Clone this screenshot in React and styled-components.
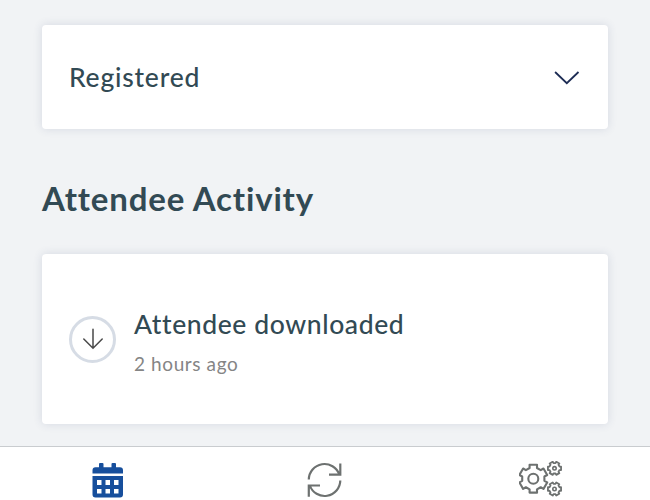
import React from 'react';
import styled, { createGlobalStyle } from "styled-components"

const GlobalStyle = createGlobalStyle`
  body {
    margin: 0;
    background: #f1f3f5;
    font-family: Lato, "Open Sans", sans-serif;
    color: #324a54;
  }
`

const Screen = styled.div`
  display: flex;
  flex-direction: column;
  height: 500px;
  overflow: hidden;
`

const Content = styled.main`
  flex: 1;
  padding: 25px 42px 0;
`

const Card = styled.section`
  display: flex;
  align-items: center;
  justify-content: ${props => props.$spread ? 'space-between' : 'flex-start'};
  box-sizing: border-box;
  height: ${props => props.$height}px;
  padding: 0 28px 0 27px;
  border-radius: 4px;
  background: #fff;
  box-shadow: 0 0 10px rgba(50, 65, 115, 0.14);
`

const Label = styled.div`
  font-size: 26.5px;
  font-weight: 500;
  line-height: 32px;
  letter-spacing: ${props => props.$spacing || 0}px;
`

const Heading = styled.h2`
  margin: 51px 0 37px;
  font-size: 33px;
  font-weight: 700;
  line-height: 37px;
  letter-spacing: 0.82px;
`

const Badge = styled.div`
  display: flex;
  align-items: center;
  justify-content: center;
  box-sizing: border-box;
  width: 47px;
  height: 47px;
  margin-right: 18px;
  border: 3px solid #d6dce5;
  border-radius: 50%;
`

const Activity = styled.div`
  padding-top: 6px;
`

const Time = styled.div`
  margin-top: 12px;
  font-size: 19px;
  line-height: 24px;
  letter-spacing: 0.6px;
  color: #858585;
`

const TabBar = styled.nav`
  display: grid;
  grid-template-columns: repeat(3, 1fr);
  box-sizing: border-box;
  height: 54px;
  border-top: 1px solid #c9cccf;
  background: #fff;
`

const Tab = styled.a`
  display: flex;
  justify-content: center;
  padding-top: 14px;
  color: ${props => props.$active ? '#174f9c' : '#6d7170'};
`

// outline of a six toothed wheel, angle turns the first tooth
function gearPath(cx, cy, outer, inner, angle) {
    const points = []
    for (let i = 0; i < 6; i++) {
        const a = angle + i * 60
        points.push([inner, a - 19], [outer, a - 15], [outer, a + 15], [inner, a + 19])
    }
    return points.map(([r, a], i) => {
        const t = a * Math.PI / 180
        return `${i ? 'L' : 'M'}${(cx + r * Math.cos(t)).toFixed(2)} ${(cy + r * Math.sin(t)).toFixed(2)}`
    }).join('') + 'Z'
}

function ChevronIcon() {
    return (
        <svg width="26" height="16" viewBox="0 0 26 16" fill="none" stroke="#1d2c54" strokeWidth="1.8">
            <path d="M1.1 3L12.8 14.2L24.5 3" />
        </svg>
    )
}

function ArrowDownIcon() {
    return (
        <svg width="22" height="22" viewBox="0 0 22 22" fill="none" stroke="#484848" strokeWidth="1.5" strokeLinecap="round">
            <path d="M11 1.3V20.3M1.8 11L11 20.3L20.2 11" />
        </svg>
    )
}

function CalendarIcon() {
    return (
        <svg width="32" height="37" viewBox="0 0 32 37" fill="currentColor">
            <path d="M3.5 6.300H7V3q0-1 1-1h2.5q1 0 1 1v3.300h8V3q0-1 1-1H23q1 0 1 1v3.300h4q3 0 3 3v3.200H.5V9.300q0-3 3-3Z" />
            <path fillRule="evenodd" d="M.5 15H31v18.500q0 3-3 3H3.500q-3 0-3-3ZM5 19v5h4.500v-5ZM13.500 19v5H18v-5ZM22 19v5h4.500v-5ZM5 28v4.500h4.500V28ZM13.500 28v4.500H18V28ZM22 28v4.500h4.500V28Z" />
        </svg>
    )
}

function SyncIcon() {
    return (
        <svg width="36" height="37" viewBox="0 0 36 37" fill="none" stroke="currentColor" strokeWidth="2.2">
            <path d="M1.8 18.5A15.7 15.7 0 0 1 32.3 13.5M33.3 2.5V13.7H22" />
            <path d="M33.3 19.5A15.7 15.7 0 0 1 2.8 24.5M1.8 35.7V24.5H13" />
        </svg>
    )
}

function GearsIcon() {
    return (
        <svg width="46" height="38" viewBox="0 0 46 38" fill="none" stroke="currentColor" strokeWidth="2.1" strokeLinejoin="round">
            <path d={gearPath(14.3, 17.7, 14.4, 11.3, 30)} />
            <circle cx="14.3" cy="17.7" r="5" />
            <path d={gearPath(35.5, 7.3, 6.8, 5.3, 0)} strokeWidth="1.8" />
            <circle cx="35.5" cy="7.3" r="1.7" strokeWidth="1.6" />
            <path d={gearPath(35.5, 28, 6.8, 5.3, 0)} strokeWidth="1.8" />
            <circle cx="35.5" cy="28" r="1.7" strokeWidth="1.6" />
        </svg>
    )
}

export default function App(){
    return (
        <Screen>
            <GlobalStyle />
            <Content>
                <Card $height={104} $spread>
                    <Label $spacing={0.78}>Registered</Label>
                    <ChevronIcon />
                </Card>
                <Heading>Attendee Activity</Heading>
                <Card $height={170}>
                    <Badge><ArrowDownIcon /></Badge>
                    <Activity>
                        <Label $spacing={0.6}>Attendee downloaded</Label>
                        <Time>2 hours ago</Time>
                    </Activity>
                </Card>
            </Content>
            <TabBar>
                <Tab $active><CalendarIcon /></Tab>
                <Tab><SyncIcon /></Tab>
                <Tab><GearsIcon /></Tab>
            </TabBar>
        </Screen>
    )
}
